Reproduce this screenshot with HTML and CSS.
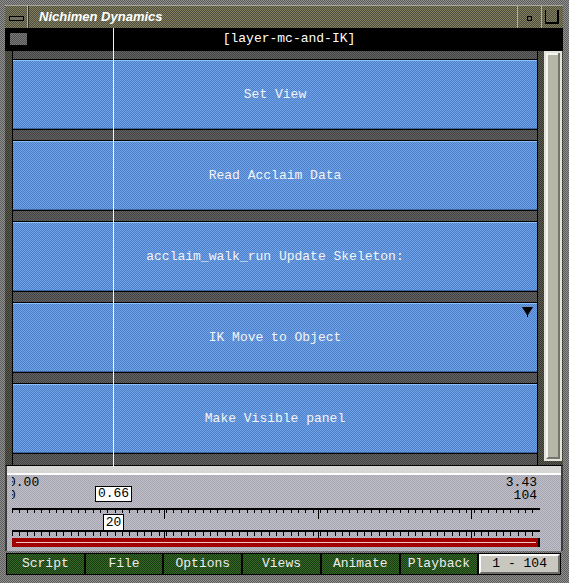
FILE: index.html
```html
<!DOCTYPE html>
<html>
<head>
<meta charset="utf-8">
<link rel="stylesheet" href="styles.css">
</head>
<body>
<div class="win">
  <div class="titlebar">
    <div class="tb-menu"><span class="tb-rect"></span></div>
    <div class="tb-title">Nichimen Dynamics</div>
    <div class="tb-min"><span class="tb-sq"></span></div>
    <div class="tb-max">
      <svg width="15" height="16" viewBox="0 0 15 16"><path d="M0.5 1 V14.5 H13.5 V1" fill="none" stroke="#000" stroke-width="1"/><path d="M13 1 V15 M1 14 H14" stroke="#000" stroke-width="2"/></svg>
    </div>
  </div>
  <div class="docbar">
    <span class="doc-sq"></span>
    <span class="doc-title">[layer-mc-and-IK]</span>
  </div>
  <div class="main">
    <div class="panels">
      <div class="panel"><span>Set View</span></div>
      <div class="panel"><span>Read Acclaim Data</span></div>
      <div class="panel"><span>acclaim_walk_run Update Skeleton:</span></div>
      <div class="panel"><span>IK Move to Object</span><svg class="panel-arrow" width="11" height="10" viewBox="0 0 11 10"><path d="M0 0 H11 L6 8 V10 H5 V8 Z" fill="#000"/></svg></div>
      <div class="panel"><span>Make Visible panel</span></div>
    </div>
    <div class="scroll"><div class="thumb"></div></div>
  </div>
  <div class="timeline">
    <div class="tl-band"></div>
    <div class="tl-body">
      <div class="tl-labels">
        <div class="lab-left"><div>0.00</div><div>0</div></div>
        <div class="lab-right"><div>3.43</div><div>104</div></div>
      </div>
      <div class="ruler ruler1">
        <span class="longtick" style="left:152px"></span>
        <span class="longtick" style="left:306px"></span>
        <span class="longtick" style="left:459px"></span>
      </div>
      <div class="ruler ruler2">
        <span class="longtick2" style="left:152px"></span>
        <span class="longtick2" style="left:306px"></span>
        <span class="longtick2" style="left:459px"></span>
      </div>
      <div class="redbar"><span class="redbar-line"></span></div>
      <div class="marker marker-time" style="left:88px">0.66</div>
      <div class="marker marker-frame" style="left:96px">20</div>
    </div>
  </div>
  <div class="buttons">
    <div class="btn">Script</div>
    <div class="btn">File</div>
    <div class="btn">Options</div>
    <div class="btn">Views</div>
    <div class="btn">Animate</div>
    <div class="btn">Playback</div>
    <div class="range">1 - 104</div>
  </div>
  <div class="cursor"></div>
</div>
</body>
</html>
```
FILE: styles.css
```css
html, body {
  margin: 0;
  padding: 0;
  background: #000;
}
.win {
  position: relative;
  width: 569px;
  height: 583px;
  box-sizing: border-box;
  padding: 5px 6px 0 5px;
  display: flex;
  flex-direction: column;
  background: repeating-conic-gradient(#909090 0 25%, #5c5c5a 0 50%) 0 0 / 2px 2px;
  font-family: "Liberation Mono", "DejaVu Sans Mono", monospace;
  font-size: 13px;
  overflow: hidden;
}

/* title bar */
.titlebar {
  height: 23px;
  box-sizing: border-box;
  border-top: 1px solid #a8a8a0;
  display: flex;
  align-items: stretch;
  background: repeating-conic-gradient(#817f60 0 25%, #4f4e3c 0 50%) 0 0 / 2px 2px;
}
.tb-menu {
  width: 22px;
  border-right: 1px solid #b0b0a0;
  box-shadow: 1px 0 #303028;
  display: flex;
  align-items: center;
  justify-content: center;
}
.tb-rect {
  width: 13px;
  height: 3px;
  border: 1px solid #000;
  background: #707060;
  margin-top: 3px;
}
.tb-title {
  flex: 1;
  padding-left: 11px;
  color: #fff;
  font-family: "Liberation Sans", Arial, sans-serif;
  font-weight: bold;
  font-style: italic;
  font-size: 13px;
  line-height: 21px;
}
.tb-min {
  width: 23px;
  border-left: 1px solid #b0b0a0;
  border-right: 1px solid #b0b0a0;
  display: flex;
  align-items: center;
  justify-content: center;
}
.tb-sq {
  width: 3px;
  height: 3px;
  border: 1px solid #000;
  margin-top: 2px;
}
.tb-max {
  width: 21px;
  display: flex;
  align-items: flex-start;
  justify-content: center;
  padding-top: 3px;
}

/* document bar */
.docbar {
  height: 21px;
  background: #000;
  display: flex;
  align-items: center;
}
.doc-sq {
  width: 17px;
  height: 12px;
  margin-left: 5px;
  background: repeating-conic-gradient(#7c7c7c 0 25%, #4e4e4e 0 50%) 0 0 / 2px 2px;
}
.doc-title {
  flex: 1;
  text-align: center;
  margin-right: 12px;
  color: #fff;
  line-height: 20px;
}

/* main panel area */
.main {
  height: 416px;
  box-sizing: border-box;
  border-top: 2px solid #000;
  display: flex;
  padding-left: 7px;
  background: repeating-conic-gradient(#5c5c50 0 25%, #36362e 0 50%) 0 0 / 2px 2px;
}
.panels {
  width: 524px;
  border-left: 1px solid #000;
  border-right: 1px solid #000;
  padding: 8px 0 11px;
  display: flex;
  flex-direction: column;
  gap: 10px;
  background: repeating-conic-gradient(#626262 0 25%, #444444 0 50%) 0 0 / 2px 2px;
}
.panel {
  position: relative;
  height: 71px;
  box-sizing: border-box;
  border-top: 1px solid #000;
  border-bottom: 1px solid #000;
  box-shadow: inset 0 1px #8cc0ff, inset 0 -1px #3a64a0;
  background: repeating-conic-gradient(#6ea2ec 0 25%, #4f80c4 0 50%) 0 0 / 2px 2px;
  color: #f4f4f4;
  display: flex;
  align-items: center;
  justify-content: center;
}
.panel-arrow {
  position: absolute;
  top: 4px;
  right: 4px;
}
.scroll {
  width: 18px;
  margin-left: 6px;
  margin-bottom: 4px;
  box-sizing: border-box;
  border: 2px solid #e4e4dc;
  background: #b6b6a6;
  box-shadow: inset -2px 0 #74746c;
}
.thumb {
  height: 100%;
  box-sizing: border-box;
  border-left: 2px solid #f4f4ee;
  border-top: 2px solid #f4f4ee;
  border-bottom: 2px solid #74746c;
  margin-right: 2px;
}

/* timeline */
.timeline {
  height: 86px;
  box-sizing: border-box;
  border-top: 1px solid #000;
  border-left: 2px solid #3c3c3c;
  border-right: 2px solid #3c3c3c;
  display: flex;
  flex-direction: column;
}
.tl-band {
  height: 7px;
  background: #d6d6d4;
  border-bottom: 2px solid #fff;
}
.tl-body {
  position: relative;
  flex: 1;
  padding: 0 21px 0 5px;
  background: repeating-conic-gradient(#c0c0c6 0 25%, #a4a4b2 0 50%) 0 0 / 2px 2px;
  color: #000;
}
.tl-labels {
  height: 33px;
  box-sizing: border-box;
  padding-top: 1px;
  padding-right: 3px;
  display: flex;
  justify-content: space-between;
  line-height: 13px;
}
.lab-left {
  overflow: hidden;
}
.lab-left div {
  margin-left: -4px;
}
.lab-right {
  text-align: right;
}
.ruler {
  position: relative;
  width: 528px;
}
.ruler1 {
  height: 22px;
  background:
    linear-gradient(#000, #000) 0 0 / 100% 2px no-repeat,
    repeating-linear-gradient(to right, #000 0 1px, transparent 1px 7.33px) 0 2px / 100% 3px no-repeat;
}
.ruler2 {
  height: 8px;
  background:
    linear-gradient(#000, #000) 0 0 / 100% 2px no-repeat,
    repeating-linear-gradient(to right, #000 0 1px, transparent 1px 7.33px) 0 2px / 100% 4px no-repeat;
}
.longtick {
  position: absolute;
  top: 0;
  width: 1px;
  height: 11px;
  background: #000;
}
.longtick2 {
  position: absolute;
  top: 0;
  width: 1px;
  height: 8px;
  background: #000;
}
.redbar {
  position: relative;
  width: 528px;
  height: 9px;
  box-sizing: border-box;
  background: #a00000;
  border-right: 2px solid #000;
}
.redbar-line {
  position: absolute;
  left: 4px;
  right: 2px;
  top: 4px;
  height: 1px;
  background: #f0c8c8;
}
.marker {
  position: absolute;
  background: #fff;
  border: 1px solid #000;
  box-sizing: border-box;
  text-align: center;
  color: #000;
}
.marker-time {
  top: 11px;
  width: 37px;
  height: 16px;
  line-height: 14px;
}
.marker-frame {
  top: 39px;
  width: 21px;
  height: 17px;
  line-height: 15px;
}

/* bottom buttons */
.buttons {
  height: 22px;
  margin-top: 2px;
  margin-left: 1px;
  margin-right: 2px;
  box-sizing: border-box;
  padding: 1px;
  background: #000;
  display: flex;
  gap: 2px;
}
.btn {
  flex: 1;
  background: repeating-conic-gradient(#346828 0 25%, #1c3c12 0 50%) 0 0 / 2px 2px;
  color: #ececec;
  text-align: center;
  line-height: 20px;
}
.range {
  flex: 1;
  box-sizing: border-box;
  background: #c8c8c0;
  border-top: 2px solid #fafafa;
  border-left: 2px solid #fafafa;
  border-bottom: 2px solid #6c6c68;
  border-right: 2px solid #6c6c68;
  color: #000;
  text-align: center;
  line-height: 16px;
}

.cursor {
  position: absolute;
  left: 113px;
  top: 28px;
  width: 1px;
  height: 439px;
  background: #f4f4f4;
}
```
